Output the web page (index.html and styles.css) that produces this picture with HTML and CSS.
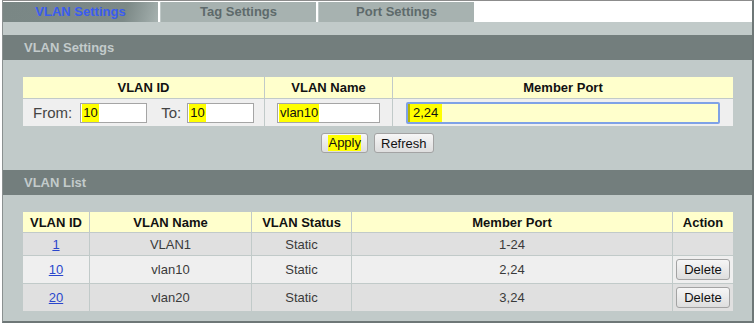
FILE: index.html
```html
<!DOCTYPE html>
<html lang="en">
<head>
    <meta charset="UTF-8">
    <title>VLAN Settings</title>
    <link rel="stylesheet" href="styles.css">
</head>
<body>
    <div class="frame">
        <!-- Tabs -->
        <div class="tabs">
            <div class="tab tab-active">VLAN Settings</div>
            <div class="tab">Tag Settings</div>
            <div class="tab">Port Settings</div>
        </div>

        <div class="panel">
            <!-- VLAN Settings -->
            <div class="bar">VLAN Settings</div>
            <table class="grid grid-form">
                <colgroup>
                    <col style="width: 241px">
                    <col style="width: 127px">
                    <col style="width: 340px">
                </colgroup>
                <thead>
                    <tr>
                        <th>VLAN ID</th>
                        <th>VLAN Name</th>
                        <th>Member Port</th>
                    </tr>
                </thead>
                <tbody>
                    <tr>
                        <td>
                            <div class="range">
                                <span class="range-label">From:</span>
                                <span class="field field-short"><mark>10</mark></span>
                                <span class="range-label range-to">To:</span>
                                <span class="field field-short"><mark>10</mark></span>
                            </div>
                        </td>
                        <td class="center"><span class="field field-name"><mark>vlan10</mark></span></td>
                        <td class="center"><span class="field field-port"><mark>2,24</mark></span></td>
                    </tr>
                </tbody>
            </table>
            <div class="actions">
                <button class="btn"><mark>Apply</mark></button>
                <button class="btn">Refresh</button>
            </div>

            <!-- VLAN List -->
            <div class="bar bar-list">VLAN List</div>
            <table class="grid grid-list">
                <colgroup>
                    <col style="width: 66px">
                    <col style="width: 161px">
                    <col style="width: 99px">
                    <col style="width: 320px">
                    <col style="width: 60px">
                </colgroup>
                <thead>
                    <tr>
                        <th>VLAN ID</th>
                        <th>VLAN Name</th>
                        <th>VLAN Status</th>
                        <th>Member Port</th>
                        <th>Action</th>
                    </tr>
                </thead>
                <tbody>
                    <tr class="row-short">
                        <td><a href="#">1</a></td>
                        <td>VLAN1</td>
                        <td>Static</td>
                        <td>1-24</td>
                        <td></td>
                    </tr>
                    <tr class="row-light">
                        <td><a href="#">10</a></td>
                        <td>vlan10</td>
                        <td>Static</td>
                        <td>2,24</td>
                        <td><button class="btn btn-delete">Delete</button></td>
                    </tr>
                    <tr>
                        <td><a href="#">20</a></td>
                        <td>vlan20</td>
                        <td>Static</td>
                        <td>3,24</td>
                        <td><button class="btn btn-delete">Delete</button></td>
                    </tr>
                </tbody>
            </table>
        </div>
    </div>
</body>
</html>
```

FILE: styles.css
```css
body {
    margin: 0;
    background: white;
    font-family: "Liberation Sans", Arial, sans-serif;
    font-size: 13px;
    color: #333;
}

/* Outer frame */
.frame {
    margin: 0 2px 0 2px;
    border-top: 1px solid #8c8c8c;
    border-left: 1px solid #8a9090;
    border-right: 2px solid #6e7777;
    border-bottom: 2px solid #6e7777;
}

/* Tabs */
.tabs {
    display: flex;
    gap: 2px;
    padding-top: 1px;
    height: 20px;
}

.tab {
    width: 155px;
    height: 20px;
    line-height: 20px;
    text-align: center;
    font-weight: bold;
    font-size: 13px;
    color: #5e6a6b;
    background-color: #a7b2b0;
}

.tab + .tab {
    border-left: 1px solid #bfc8c7;
}

.tab-active {
    color: #3a5cf0;
    background: linear-gradient(105deg, #7a8785 0%, #7c8987 78%, #96a2a0 92%, #a7b2b0 100%);
}

/* Panel */
.panel {
    background-color: #c1cac9;
    padding: 13px 0 9px;
}

.bar {
    height: 25px;
    line-height: 25px;
    padding-left: 21px;
    background-color: #737e7d;
    color: #c3cbcb;
    font-weight: bold;
    font-size: 13px;
}

.bar-list {
    margin-top: 17px;
}

/* Tables */
.grid {
    border-collapse: separate;
    border-spacing: 1px;
    margin: 16px 0 0 19px;
    width: 712px;
    table-layout: fixed;
}

.grid th {
    background-color: #ffffcc;
    color: #111;
    font-weight: bold;
    font-size: 13px;
    text-align: center;
    padding: 0;
}

.grid td {
    padding: 0;
    text-align: center;
    color: #3a3a3a;
}

.grid-form th {
    height: 21px;
}

.grid-form td {
    height: 27px;
    background-color: #efefef;
}

.grid-list th {
    height: 20px;
}

.grid-list td {
    height: 27px;
    background-color: #e0e0e0;
}

.grid-list .row-short td {
    height: 22px;
}

.grid-list .row-light td {
    background-color: #efefef;
}

.grid a {
    color: #2a46cc;
    text-decoration: underline;
}

/* Form fields */
.range {
    display: flex;
    align-items: center;
    padding-left: 10px;
}

.range-label {
    font-size: 15px;
    color: #444;
    margin-right: 8px;
}

.range-to {
    margin-left: 14px;
    margin-right: 6px;
}

.field {
    display: inline-block;
    box-sizing: border-box;
    height: 20px;
    line-height: 18px;
    padding-left: 1px;
    border: 1px solid #a5a5a5;
    background-color: white;
    text-align: left;
    color: #111;
    vertical-align: middle;
}

.field-short {
    width: 67px;
}

.field-name {
    width: 103px;
}

.field-port {
    width: 314px;
    height: 22px;
    padding-left: 0;
    border: 2px solid #7fa2e6;
    border-radius: 2px;
    background-color: #ffffcc;
}

mark {
    display: inline-block;
    background-color: #ffff00;
    color: #111;
    line-height: 18px;
    padding: 0 1px;
}

.field-port mark {
    padding: 0 4px 0 3px;
    border-left: 2px solid #b7b800;
}

/* Buttons */
.actions {
    display: flex;
    justify-content: center;
    gap: 6px;
    margin-top: 6px;
}

.btn {
    font-family: "Liberation Sans", Arial, sans-serif;
    font-size: 13px;
    color: #111;
    height: 20px;
    padding: 0 6px;
    border: 1px solid #a3a3a3;
    border-radius: 3px;
    background: linear-gradient(#f6f6f6, #dedede);
}

.btn mark {
    line-height: 16px;
    padding: 0;
}

.btn-delete {
    height: 21px;
    padding: 0 7px;
}
```
